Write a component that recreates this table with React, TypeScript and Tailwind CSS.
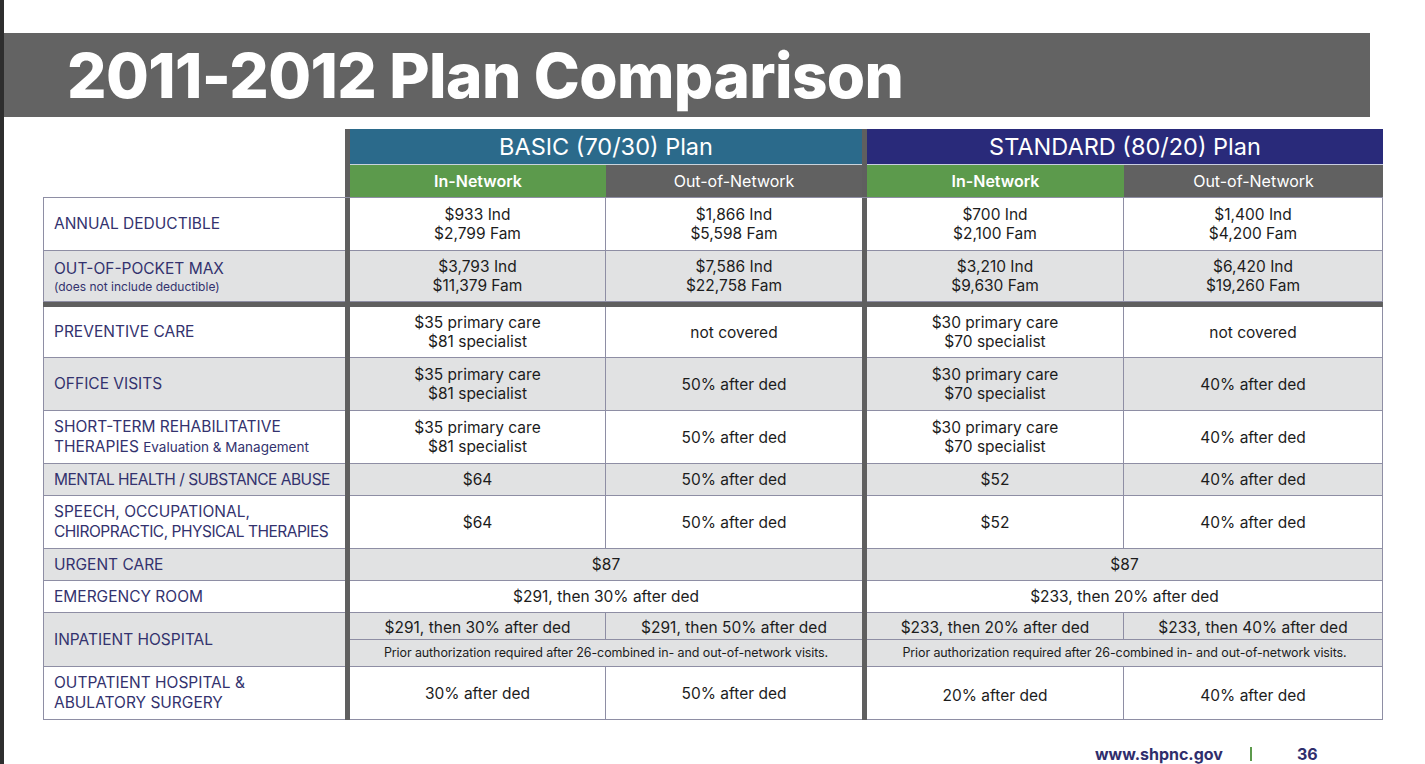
import React from "react";

const GRID = "grid grid-cols-[302px_5px_256px_256px_5px_257px_259px]";
const LINE = "border-[#8e8ea4]";
const DIV = "bg-[#5f5f5f]";

type RowProps = {
  label: React.ReactNode;
  h: string;
  gray?: boolean;
  cells: React.ReactNode[];
};

function Label({ children, gray, h }: { children: React.ReactNode; gray?: boolean; h: string }) {
  return (
    <div
      className={`${h} flex flex-col justify-center pl-[10px] border-l border-b ${LINE} ${
        gray ? "bg-[#e1e2e3]" : "bg-white"
      } text-[#33326e] text-[15.5px] leading-[20px] whitespace-nowrap`}
    >
      {children}
    </div>
  );
}

function Cell({ children, right }: { children: React.ReactNode; right?: boolean }) {
  return (
    <div
      className={`flex flex-col items-center justify-center text-center border-b ${LINE} ${
        right ? "border-r" : ""
      } text-[#1c1c1c] text-[15.5px] leading-[19px]`}
    >
      {children}
    </div>
  );
}

function Row({ label, h, gray, cells }: RowProps) {
  return (
    <div className={`${GRID} ${h} ${gray ? "bg-[#e1e2e3]" : "bg-white"}`}>
      <Label gray={gray} h={h}>
        {label}
      </Label>
      <div className={DIV} />
      <Cell right>{cells[0]}</Cell>
      <Cell>{cells[1]}</Cell>
      <div className={DIV} />
      <Cell right>{cells[2]}</Cell>
      <Cell right>{cells[3]}</Cell>
    </div>
  );
}

function Two({ a, b }: { a: string; b: string }) {
  return (
    <>
      <span>{a}</span>
      <span>{b}</span>
    </>
  );
}

const PRIOR = "Prior authorization required after 26-combined in- and out-of-network visits.";

export default function App() {
  return (
    <div className="w-[1425px] h-[764px] bg-white flex overflow-hidden font-['Inter',sans-serif]">
      <div className="w-[4px] h-full bg-[#2e2e2e]" />
      <div className="flex flex-col">
        <div className="mt-[33px] w-[1366px] h-[84px] bg-[#636363] flex items-center pl-[63px]">
          <h1 className="text-white font-extrabold text-[62px] leading-none tracking-[-0.6px] pt-[1px]">
            2011-2012 Plan Comparison
          </h1>
        </div>

        <div className="mt-[12px] ml-[39px] w-[1340px] flex flex-col">
          {/* header row 1 */}
          <div className={`${GRID} h-[36px]`}>
            <div className="bg-white" />
            <div className={DIV} />
            <div className="col-span-2 bg-[#2b6a8b] border-b border-[#c9d3dc] flex items-center justify-center text-white text-[23.5px]">
              BASIC (70/30) Plan
            </div>
            <div className={DIV} />
            <div className="col-span-2 bg-[#292a7a] border-b border-[#c9cde0] flex items-center justify-center text-white text-[23.5px]">
              STANDARD (80/20) Plan
            </div>
          </div>
          {/* header row 2 */}
          <div className={`${GRID} h-[32px]`}>
            <div className="bg-white" />
            <div className={DIV} />
            <div className="bg-[#5c9a4c] flex items-center justify-center text-white font-semibold text-[16px]">
              In-Network
            </div>
            <div className="bg-[#616161] flex items-center justify-center text-white text-[16px]">
              Out-of-Network
            </div>
            <div className={DIV} />
            <div className="bg-[#5c9a4c] flex items-center justify-center text-white font-semibold text-[16px]">
              In-Network
            </div>
            <div className="bg-[#616161] flex items-center justify-center text-white text-[16px]">
              Out-of-Network
            </div>
          </div>

          <div className={`border-t ${LINE}`}>
            <Row
              h="h-[53px]"
              label="ANNUAL DEDUCTIBLE"
              cells={[
                <Two a="$933 Ind" b="$2,799 Fam" />,
                <Two a="$1,866 Ind" b="$5,598 Fam" />,
                <Two a="$700 Ind" b="$2,100 Fam" />,
                <Two a="$1,400 Ind" b="$4,200 Fam" />,
              ]}
            />
            <Row
              h="h-[51px]"
              gray
              label={
                <>
                  <span>OUT-OF-POCKET MAX</span>
                  <span className="text-[12px] leading-[15px]">(does not include deductible)</span>
                </>
              }
              cells={[
                <Two a="$3,793 Ind" b="$11,379 Fam" />,
                <Two a="$7,586 Ind" b="$22,758 Fam" />,
                <Two a="$3,210 Ind" b="$9,630 Fam" />,
                <Two a="$6,420 Ind" b="$19,260 Fam" />,
              ]}
            />
          </div>
          <div className="h-[5px] bg-[#5f5f5f]" />
          <Row
            h="h-[51px]"
            label="PREVENTIVE CARE"
            cells={[
              <Two a="$35 primary care" b="$81 specialist" />,
              "not covered",
              <Two a="$30 primary care" b="$70 specialist" />,
              "not covered",
            ]}
          />
          <Row
            h="h-[53px]"
            gray
            label="OFFICE VISITS"
            cells={[
              <Two a="$35 primary care" b="$81 specialist" />,
              "50% after ded",
              <Two a="$30 primary care" b="$70 specialist" />,
              "40% after ded",
            ]}
          />
          <Row
            h="h-[53px]"
            label={
              <>
                <span>SHORT-TERM REHABILITATIVE</span>
                <span>
                  THERAPIES <span className="text-[13.5px]">Evaluation &amp; Management</span>
                </span>
              </>
            }
            cells={[
              <Two a="$35 primary care" b="$81 specialist" />,
              "50% after ded",
              <Two a="$30 primary care" b="$70 specialist" />,
              "40% after ded",
            ]}
          />
          <Row
            h="h-[32px]"
            gray
            label={<span className="tracking-[-0.5px]">MENTAL HEALTH / SUBSTANCE ABUSE</span>}
            cells={["$64", "50% after ded", "$52", "40% after ded"]}
          />
          <Row
            h="h-[53px]"
            label={
              <>
                <span>SPEECH, OCCUPATIONAL,</span>
                <span className="tracking-[-0.5px]">CHIROPRACTIC, PHYSICAL THERAPIES</span>
              </>
            }
            cells={["$64", "50% after ded", "$52", "40% after ded"]}
          />

          {/* urgent care */}
          <div className={`${GRID} h-[32px] bg-[#e1e2e3]`}>
            <Label gray h="h-[32px]">URGENT CARE</Label>
            <div className={DIV} />
            <div className="col-span-2">
              <div className={`h-full flex items-center justify-center border-b ${LINE} text-[#1c1c1c] text-[15.5px]`}>$87</div>
            </div>
            <div className={DIV} />
            <div className="col-span-2">
              <div className={`h-full flex items-center justify-center border-b border-r ${LINE} text-[#1c1c1c] text-[15.5px]`}>$87</div>
            </div>
          </div>
          {/* emergency room */}
          <div className={`${GRID} h-[32px] bg-white`}>
            <Label h="h-[32px]">EMERGENCY ROOM</Label>
            <div className={DIV} />
            <div className="col-span-2">
              <div className={`h-full flex items-center justify-center border-b ${LINE} text-[#1c1c1c] text-[15.5px]`}>
                $291, then 30% after ded
              </div>
            </div>
            <div className={DIV} />
            <div className="col-span-2">
              <div className={`h-full flex items-center justify-center border-b border-r ${LINE} text-[#1c1c1c] text-[15.5px]`}>
                $233, then 20% after ded
              </div>
            </div>
          </div>
          {/* inpatient */}
          <div className={`${GRID} h-[54px] bg-[#e1e2e3]`}>
            <Label gray h="h-[54px]">INPATIENT HOSPITAL</Label>
            <div className={DIV} />
            <div className={`col-span-2 flex flex-col border-b ${LINE}`}>
              <div className={`h-[27px] grid grid-cols-2 border-b ${LINE}`}>
                <div className={`flex items-center justify-center pt-[3px] border-r ${LINE} text-[#1c1c1c] text-[15.5px]`}>
                  $291, then 30% after ded
                </div>
                <div className="flex items-center justify-center pt-[3px] text-[#1c1c1c] text-[15.5px]">
                  $291, then 50% after ded
                </div>
              </div>
              <div className="flex-1 flex items-center justify-center text-[#1c1c1c] text-[12.5px] tracking-[-0.1px] whitespace-nowrap">
                {PRIOR}
              </div>
            </div>
            <div className={DIV} />
            <div className={`col-span-2 flex flex-col border-b border-r ${LINE}`}>
              <div className={`h-[27px] grid grid-cols-[257px_1fr] border-b ${LINE}`}>
                <div className={`flex items-center justify-center pt-[3px] border-r ${LINE} text-[#1c1c1c] text-[15.5px]`}>
                  $233, then 20% after ded
                </div>
                <div className="flex items-center justify-center pt-[3px] text-[#1c1c1c] text-[15.5px]">
                  $233, then 40% after ded
                </div>
              </div>
              <div className="flex-1 flex items-center justify-center text-[#1c1c1c] text-[12.5px] tracking-[-0.1px] whitespace-nowrap">
                {PRIOR}
              </div>
            </div>
          </div>
          <Row
            h="h-[53px]"
            label={
              <>
                <span>OUTPATIENT HOSPITAL &amp;</span>
                <span>ABULATORY SURGERY</span>
              </>
            }
            cells={["30% after ded", "50% after ded", <span className="pt-[4px]">20% after ded</span>, <span className="pt-[4px]">40% after ded</span>]}
          />
        </div>

        <div className="mt-[26px] flex items-center text-[#2f2e6c] font-bold text-[16px] leading-none">
          <span className="ml-[1091px]">www.shpnc.gov</span>
          <span className="ml-[27px] w-[2px] h-[14px] bg-[#5c9a4c]" />
          <span className="ml-[45px]">36</span>
        </div>
      </div>
    </div>
  );
}
